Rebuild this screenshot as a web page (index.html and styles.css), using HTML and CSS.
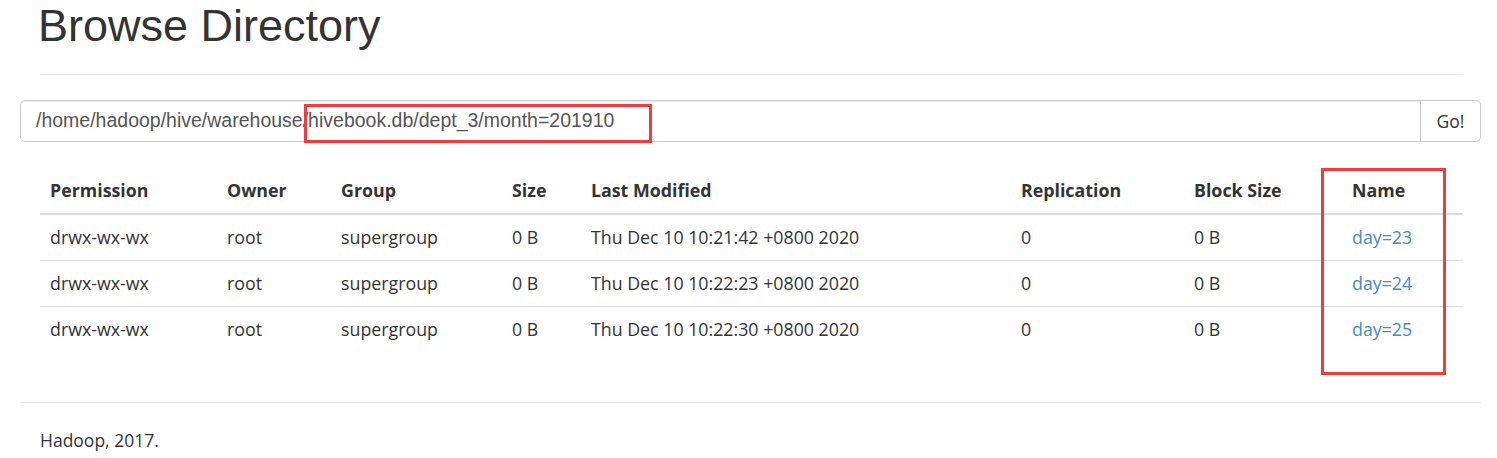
FILE: index.html
```html
<!DOCTYPE html>
<html lang="en">
<head>
  <meta charset="UTF-8" />
  <title>Browsing HDFS</title>
  <link rel="stylesheet" href="styles.css">
</head>
<body>
  <div class="container">
    <div class="inner">
      <div class="page-header">
        <h1>Browse Directory</h1>
      </div>
    </div>

    <div class="input-group">
      <input type="text" class="path-input" value="/home/hadoop/hive/warehouse/hivebook.db/dept_3/month=201910" />
      <button class="go-btn">Go!</button>
    </div>

    <div class="inner">
      <table class="table">
        <thead>
          <tr>
            <th class="c-perm">Permission</th>
            <th class="c-owner">Owner</th>
            <th class="c-group">Group</th>
            <th class="c-size">Size</th>
            <th class="c-mod">Last Modified</th>
            <th class="c-rep">Replication</th>
            <th class="c-block">Block Size</th>
            <th class="c-name">Name</th>
          </tr>
        </thead>
        <tbody>
          <tr>
            <td>drwx-wx-wx</td>
            <td>root</td>
            <td>supergroup</td>
            <td>0 B</td>
            <td>Thu Dec 10 10:21:42 +0800 2020</td>
            <td>0</td>
            <td>0 B</td>
            <td><a href="#">day=23</a></td>
          </tr>
          <tr>
            <td>drwx-wx-wx</td>
            <td>root</td>
            <td>supergroup</td>
            <td>0 B</td>
            <td>Thu Dec 10 10:22:23 +0800 2020</td>
            <td>0</td>
            <td>0 B</td>
            <td><a href="#">day=24</a></td>
          </tr>
          <tr>
            <td>drwx-wx-wx</td>
            <td>root</td>
            <td>supergroup</td>
            <td>0 B</td>
            <td>Thu Dec 10 10:22:30 +0800 2020</td>
            <td>0</td>
            <td>0 B</td>
            <td><a href="#">day=25</a></td>
          </tr>
        </tbody>
      </table>
    </div>

    <hr class="footer-rule" />
    <div class="inner">
      <p class="footer">Hadoop, 2017.</p>
    </div>
  </div>

  <!-- annotation boxes drawn over the screenshot -->
  <div class="mark mark-path"></div>
  <div class="mark mark-name"></div>
</body>
</html>
```

FILE: styles.css
```css
body {
  margin: 0;
  font-family: "Open Sans", "Noto Sans", sans-serif;
  font-size: 17.5px;
  line-height: 25px;
  color: #333;
  background: #fff;
}
.container {
  margin: 0 16px 0 20px;
}
.inner {
  padding: 0 18px 0 20px;
}
.page-header {
  padding-bottom: 23px;
  border-bottom: 1px solid #eee;
}
h1 {
  margin: 1px 0 0 -2px;
  font-family: "Liberation Sans", Arial, sans-serif;
  font-size: 45px;
  font-weight: 500;
  line-height: 1.1;
  color: #333;
}
.input-group {
  display: flex;
  margin-top: 25px;
  height: 42px;
}
.path-input {
  flex: 1;
  box-sizing: border-box;
  height: 42px;
  margin: 0;
  padding: 0 15px;
  font-family: "Liberation Sans", Arial, sans-serif;
  font-size: 19.5px;
  color: #555;
  border: 1px solid #ccc;
  border-radius: 5px 0 0 5px;
  box-shadow: inset 0 1px 1px rgba(0, 0, 0, 0.075);
  outline: none;
}
.go-btn {
  box-sizing: border-box;
  width: 61px;
  height: 42px;
  margin: 0 0 0 -1px;
  padding: 0;
  font-family: "Open Sans", "Noto Sans", sans-serif;
  font-size: 17.5px;
  color: #333;
  background: #fff;
  border: 1px solid #ccc;
  border-radius: 0 5px 5px 0;
  cursor: pointer;
}
.table {
  width: 100%;
  margin: 26px 0 0;
  border-collapse: collapse;
  border-spacing: 0;
  font-size: 17.8px;
}
.table th,
.table td {
  padding: 10px;
  text-align: left;
  vertical-align: top;
  line-height: 25px;
}
.table th {
  font-weight: 700;
  border-bottom: 2px solid #ddd;
}
.table td {
  border-top: 1px solid #ddd;
}
.table tbody tr:first-child td {
  border-top: 0;
}
.c-perm { width: 157px; }
.c-owner { width: 94px; }
.c-group { width: 151px; }
.c-size { width: 59px; }
.c-mod { width: 410px; }
.c-rep { width: 153px; }
.c-block { width: 138px; }
.table a {
  color: #428bca;
  text-decoration: none;
}
.table a:hover {
  text-decoration: underline;
}
.footer-rule {
  margin: 50px 0 25px;
  border: 0;
  border-top: 1px solid #eee;
}
.footer {
  margin: 0;
}
.mark {
  position: absolute;
  border: 3px solid #f03c3c;
  box-sizing: border-box;
}
.mark-path {
  left: 304px;
  top: 104px;
  width: 348px;
  height: 39px;
}
.mark-name {
  left: 1321px;
  top: 168px;
  width: 125px;
  height: 207px;
}
```
